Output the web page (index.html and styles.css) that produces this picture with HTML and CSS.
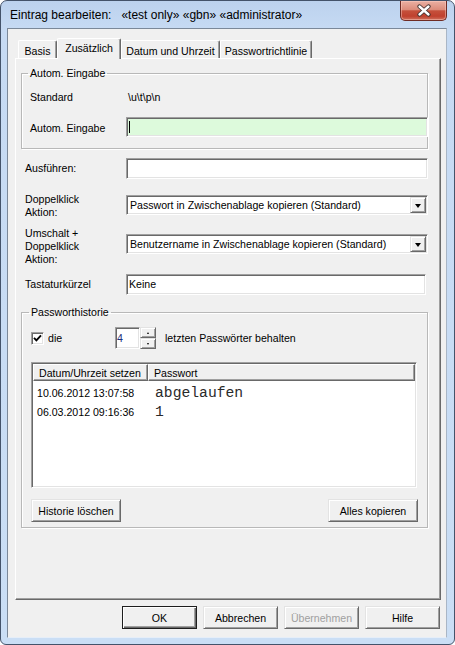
FILE: index.html
```html
<!DOCTYPE html>
<html lang="de">
<head>
<meta charset="utf-8">
<title>Eintrag bearbeiten</title>
<link rel="stylesheet" href="styles.css">
</head>
<body>
<div class="window">
  <div class="titlebar">
    <span class="title">Eintrag bearbeiten:   «test only» «gbn» «administrator»</span>
    <div class="close">
      <svg width="16" height="13" viewBox="0 0 16 13">
        <path d="M3.5 2.5 L12.5 10.5 M12.5 2.5 L3.5 10.5" stroke="#40302e" stroke-width="4.2" stroke-linecap="round" fill="none"/>
        <path d="M3.5 2.5 L12.5 10.5 M12.5 2.5 L3.5 10.5" stroke="#ffffff" stroke-width="2.4" stroke-linecap="round" fill="none"/>
      </svg>
    </div>
  </div>
  <div class="frame">
    <div class="client">
      <div class="tabs">
        <div class="tab t-basis">Basis</div>
        <div class="tab active t-zus">Zusätzlich</div>
        <div class="tab t-datum">Datum und Uhrzeit</div>
        <div class="tab t-pw">Passwortrichtlinie</div>
      </div>
      <div class="panel">
        <fieldset class="group g-auto">
          <legend>Autom. Eingabe</legend>
          <div class="grow">
            <span class="glabel">Standard</span>
            <span class="gval">\u\t\p\n</span>
          </div>
          <div class="grow g-input">
            <span class="glabel lbl-low">Autom. Eingabe</span>
            <div class="edit green wide"><span class="caret"></span></div>
          </div>
        </fieldset>

        <div class="row r-run">
          <span class="rlabel">Ausführen:</span>
          <div class="edit h21"></div>
        </div>

        <div class="row r-dbl top">
          <span class="rlabel">Doppelklick<br>Aktion:</span>
          <div class="combo c-dbl">
            <span class="ctext">Passwort in Zwischenablage kopieren (Standard)</span>
            <span class="cbtn"><span class="tri-down"></span></span>
          </div>
        </div>

        <div class="row r-shift top">
          <span class="rlabel">Umschalt +<br>Doppelklick<br>Aktion:</span>
          <div class="combo c-shift">
            <span class="ctext">Benutzername in Zwischenablage kopieren (Standard)</span>
            <span class="cbtn"><span class="tri-down"></span></span>
          </div>
        </div>

        <div class="row r-key">
          <span class="rlabel">Tastaturkürzel</span>
          <div class="edit h21 narrow"><span class="etext">Keine</span></div>
        </div>

        <fieldset class="group g-hist">
          <legend>Passworthistorie</legend>
          <div class="hrow">
            <div class="chk-wrap">
              <span class="chk">
                <svg width="9" height="9" viewBox="0 0 9 9"><path d="M1 3.8 L3.4 6.3 L8 1.4" stroke="#000" stroke-width="1.9" fill="none"/></svg>
              </span>
              <span>die</span>
            </div>
            <div class="edit spin-edit"><span class="num">4</span></div>
            <div class="spin">
              <span class="sbtn"><span class="tri-up-s"></span></span>
              <span class="sbtn"><span class="tri-down-s"></span></span>
            </div>
            <span class="keep">letzten Passwörter behalten</span>
          </div>

          <div class="list">
            <div class="lhead">
              <span class="hcell h1">Datum/Uhrzeit setzen</span>
              <span class="hcell h2">Passwort</span>
            </div>
            <div class="lbody">
              <div class="lrow"><span class="lc1">10.06.2012 13:07:58</span><span class="lc2">abgelaufen</span></div>
              <div class="lrow"><span class="lc1">06.03.2012 09:16:36</span><span class="lc2">1</span></div>
            </div>
          </div>

          <div class="hbuttons">
            <div class="btn w90">Historie löschen</div>
            <div class="btn w90">Alles kopieren</div>
          </div>
        </fieldset>
      </div>

      <div class="dlg-buttons">
        <div class="btn w75 default">OK</div>
        <div class="btn w75">Abbrechen</div>
        <div class="btn w75 disabled">Übernehmen</div>
        <div class="btn w75">Hilfe</div>
      </div>
    </div>
  </div>
</div>
</body>
</html>
```

FILE: styles.css
```css
html, body {
  margin: 0;
  padding: 0;
  background: #ffffff;
}

body {
  font-family: "Liberation Sans", Arial, sans-serif;
  font-size: 10.6px;
  color: #000;
}

.window {
  width: 455px;
  height: 645px;
  box-sizing: border-box;
  border: 1px solid #44536a;
  border-radius: 7px 7px 6px 6px;
  background: linear-gradient(#bcd2ee 0px, #c6daf3 28px, #cadef5 100%);
  display: flex;
  flex-direction: column;
  overflow: hidden;
}

.titlebar {
  height: 27px;
  display: flex;
  align-items: center;
  padding-left: 9px;
  flex: none;
}

.title {
  flex: 1;
  font-size: 12px;
  white-space: pre;
  color: #000;
}

.close {
  align-self: flex-start;
  width: 47px;
  height: 20px;
  box-sizing: border-box;
  margin-right: 7px;
  border: 1px solid #6e2b24;
  border-top: none;
  border-radius: 0 0 5px 5px;
  background: linear-gradient(#eab0a3 0%, #dc8c7b 45%, #c5503b 52%, #c0412e 80%, #d0715e 100%);
  display: flex;
  align-items: center;
  justify-content: center;
  box-shadow: inset 0 0 0 1px rgba(255, 210, 200, 0.45);
}

.frame {
  flex: 1;
  display: flex;
  padding: 0 7px 6px 6px;
}

.client {
  flex: 1;
  background: #f0f0f0;
  border: 1px solid;
  border-color: #7b8899 #a9b6c6 #e6eef8 #7b8899;
  display: flex;
  flex-direction: column;
}

/* tabs */
.tabs {
  display: flex;
  align-items: flex-end;
  height: 20px;
  margin-top: 9px;
  margin-left: 10px;
  position: relative;
  z-index: 2;
}

.tab {
  box-sizing: border-box;
  height: 18px;
  border-top: 1px solid #fff;
  border-left: 1px solid #fff;
  border-right: 1px solid #696969;
  box-shadow: inset -1px 0 0 #a0a0a0;
  border-radius: 2px 2px 0 0;
  background: #f0f0f0;
  display: flex;
  align-items: center;
  justify-content: center;
  padding-top: 2px;
  white-space: nowrap;
}

.tab.active {
  height: 21px;
  margin-bottom: -1px;
  padding-top: 0;
  padding-bottom: 2px;
}

.t-basis { width: 39px; }
.t-zus { width: 64px; }
.t-datum { width: 99px; }
.t-pw { width: 92px; }

.panel {
  width: 426px;
  height: 542px;
  box-sizing: border-box;
  margin-left: 7px;
  border: 1px solid;
  border-color: #fff #696969 #696969 #fff;
  box-shadow: inset -1px -1px 0 #a0a0a0;
  background: #f0f0f0;
  padding-left: 5px;
  flex: none;
}

/* group boxes */
.group {
  margin: 8px 0 0 0;
  width: 407px;
  box-sizing: border-box;
  border: 1px solid #b8b8b8;
  box-shadow: inset 1px 1px 0 #fff, 1px 1px 0 #fff;
  padding: 11px 0 11px 8px;
  min-width: 0;
}

.group legend {
  padding: 0 2px;
  margin-left: -2px;
  line-height: 13px;
}

.grow {
  display: grid;
  grid-template-columns: 96px 1fr;
  align-items: center;
  line-height: 13px;
}

.gval {
  padding-left: 2px;
}

.g-input {
  margin-top: 13px;
}

.lbl-low {
  padding-top: 3px;
}

.edit {
  box-sizing: border-box;
  background: #fff;
  border: 1px solid;
  border-color: #a0a0a0 #fff #fff #a0a0a0;
  box-shadow: inset 1px 1px 0 #696969, inset -1px -1px 0 #e3e3e3;
  display: flex;
  align-items: center;
}

.edit.wide {
  height: 20px;
  margin-right: -1px;
}

.edit.green {
  background: #ddfadc;
}

.caret {
  width: 1px;
  height: 12px;
  background: #000;
  margin-left: 2px;
}

.row {
  display: grid;
  grid-template-columns: 101px 302px;
  align-items: center;
  margin-left: 4px;
  line-height: 13px;
}

.row.top {
  align-items: start;
}

.r-run { margin-top: 9px; }
.r-dbl { margin-top: 14px; }
.r-shift { margin-top: 8px; }
.r-key { margin-top: 8px; }

.h21 { height: 21px; }
.narrow { width: 300px; }

.etext {
  padding-left: 2px;
}

.combo {
  box-sizing: border-box;
  height: 20px;
  background: #fff;
  border: 1px solid;
  border-color: #a0a0a0 #fff #fff #a0a0a0;
  box-shadow: inset 1px 1px 0 #696969, inset -1px -1px 0 #e3e3e3;
  display: flex;
  align-items: center;
  padding: 1px;
}

.c-dbl { margin-top: 2px; }
.c-shift { margin-top: 7px; }

.ctext {
  flex: 1;
  padding-left: 2px;
  white-space: nowrap;
}

.cbtn {
  width: 16px;
  height: 16px;
  box-sizing: border-box;
  background: #f0f0f0;
  border: 1px solid;
  border-color: #e3e3e3 #696969 #696969 #e3e3e3;
  box-shadow: inset 1px 1px 0 #fff, inset -1px -1px 0 #a0a0a0;
  display: flex;
  align-items: center;
  justify-content: center;
}

.tri-down {
  width: 0;
  height: 0;
  border-left: 3.5px solid transparent;
  border-right: 3.5px solid transparent;
  border-top: 4px solid #000;
  margin-top: 1px;
}

/* history */
.g-hist {
  margin-top: 11px;
  padding: 8px 9px 5px 9px;
}

.hrow {
  display: flex;
  align-items: center;
  height: 22px;
}

.chk-wrap {
  width: 84px;
  display: flex;
  align-items: center;
}

.chk {
  width: 13px;
  height: 13px;
  box-sizing: border-box;
  background: #fff;
  border: 1px solid;
  border-color: #a0a0a0 #fff #fff #a0a0a0;
  box-shadow: inset 1px 1px 0 #696969, inset -1px -1px 0 #e3e3e3;
  display: flex;
  align-items: center;
  justify-content: center;
  margin-right: 4px;
}

.spin-edit {
  width: 25px;
  height: 22px;
}

.num {
  padding-left: 1px;
  color: #1b2f7c;
}

.spin {
  width: 16px;
  height: 22px;
  display: flex;
  flex-direction: column;
}

.sbtn {
  height: 11px;
  box-sizing: border-box;
  background: #f0f0f0;
  border: 1px solid;
  border-color: #e3e3e3 #696969 #696969 #e3e3e3;
  box-shadow: inset 1px 1px 0 #fff, inset -1px -1px 0 #a0a0a0;
  display: flex;
  align-items: center;
  justify-content: center;
}

.tri-up-s {
  width: 0;
  height: 0;
  border-left: 1.5px solid transparent;
  border-right: 1.5px solid transparent;
  border-bottom: 2px solid #000;
}

.tri-down-s {
  width: 0;
  height: 0;
  border-left: 1.5px solid transparent;
  border-right: 1.5px solid transparent;
  border-top: 2px solid #000;
}

.keep {
  margin-left: 9px;
}

.list {
  margin-top: 13px;
  width: 386px;
  height: 126px;
  box-sizing: border-box;
  background: #fff;
  border: 1px solid;
  border-color: #a0a0a0 #fff #fff #a0a0a0;
  box-shadow: inset 1px 1px 0 #696969, inset -1px -1px 0 #e3e3e3;
  padding: 1px;
}

.lhead {
  display: flex;
  height: 17px;
}

.hcell {
  box-sizing: border-box;
  height: 17px;
  background: #f0f0f0;
  border: 1px solid;
  border-color: #fff #696969 #696969 #fff;
  box-shadow: inset -1px -1px 0 #a0a0a0;
  padding-left: 5px;
  display: flex;
  align-items: center;
  white-space: nowrap;
}

.h1 { width: 115px; }
.h2 { flex: 1; }

.lbody {
  padding-top: 3px;
}

.lrow {
  display: flex;
  align-items: baseline;
  line-height: 19px;
  height: 19px;
}

.lc1 {
  width: 115px;
  padding-left: 4px;
  box-sizing: border-box;
  white-space: nowrap;
}

.lc2 {
  padding-left: 7px;
  font-family: "Liberation Mono", "Courier New", monospace;
  font-size: 14.7px;
  color: #2a2a2a;
}

.hbuttons {
  margin-top: 11px;
  display: flex;
  justify-content: space-between;
}

/* buttons */
.btn {
  height: 23px;
  box-sizing: border-box;
  background: #f0f0f0;
  border: 1px solid;
  border-color: #e3e3e3 #696969 #696969 #e3e3e3;
  box-shadow: inset 1px 1px 0 #fff, inset -1px -1px 0 #a0a0a0;
  display: flex;
  align-items: center;
  justify-content: center;
  white-space: nowrap;
}

.btn.default {
  border-color: #1e1e1e;
  box-shadow: inset 1px 1px 0 #fff, inset -1px -1px 0 #696969, inset -2px -2px 0 #a0a0a0;
}

.btn.disabled {
  color: #a0a0a0;
}

.w90 { width: 90px; }
.w75 { width: 75px; }

.dlg-buttons {
  display: flex;
  justify-content: flex-end;
  gap: 6px;
  margin-top: 6px;
  padding-right: 6px;
}
```
